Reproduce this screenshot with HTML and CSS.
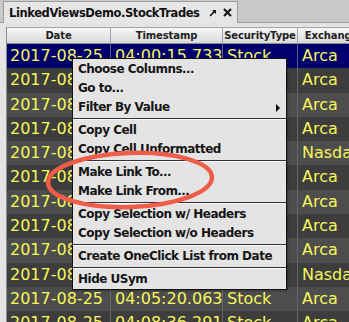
FILE: index.html
```html
<!DOCTYPE html>
<html lang="en">
<head>
    <meta charset="UTF-8">
    <title>LinkedViewsDemo.StockTrades</title>
    <link rel="stylesheet" href="styles.css">
</head>
<body>

    <div class="tabbar">
        <div class="tab">
            <span class="tab-title">LinkedViewsDemo.StockTrades</span>
            <svg class="pin" width="8" height="8" viewBox="0 0 8 8">
                <path d="M1 7 L6 2" stroke="#111" stroke-width="1.6"/>
                <path d="M3 1 H7 V5 Z" fill="#111"/>
            </svg>
            <svg class="close" width="9" height="9" viewBox="0 0 9 9">
                <path d="M1 1 L8 8 M8 1 L1 8" stroke="#111" stroke-width="2"/>
            </svg>
        </div>
    </div>

    <div class="panel">
        <div class="grid">
            <div class="head">
                <span>Date</span>
                <span>Timestamp</span>
                <span>SecurityType</span>
                <span>Exchange</span>
            </div>
            <div class="row selected"><span>2017-08-25</span><span>04:00:15.733</span><span>Stock</span><span>Arca</span></div>
            <div class="row"><span>2017-08-25</span><span>04:00:37.102</span><span>Stock</span><span>Arca</span></div>
            <div class="row alt"><span>2017-08-25</span><span>04:01:02.418</span><span>Stock</span><span>Arca</span></div>
            <div class="row"><span>2017-08-25</span><span>04:01:44.590</span><span>Stock</span><span>Arca</span></div>
            <div class="row alt"><span>2017-08-25</span><span>04:02:09.871</span><span>Stock</span><span>Nasdaq</span></div>
            <div class="row"><span>2017-08-25</span><span>04:02:51.226</span><span>Stock</span><span>Arca</span></div>
            <div class="row alt"><span>2017-08-25</span><span>04:03:18.645</span><span>Stock</span><span>Arca</span></div>
            <div class="row"><span>2017-08-25</span><span>04:03:57.309</span><span>Stock</span><span>Arca</span></div>
            <div class="row alt"><span>2017-08-25</span><span>04:04:22.754</span><span>Stock</span><span>Arca</span></div>
            <div class="row"><span>2017-08-25</span><span>04:04:48.180</span><span>Stock</span><span>Nasdaq</span></div>
            <div class="row alt"><span>2017-08-25</span><span>04:05:20.063</span><span>Stock</span><span>Arca</span></div>
            <div class="row"><span>2017-08-25</span><span>04:08:36.291</span><span>Stock</span><span>Arca</span></div>
        </div>
    </div>

    <!-- popup menu over the table -->
    <div class="menu">
        <div class="item">Choose Columns…</div>
        <div class="item">Go to…</div>
        <div class="item">Filter By Value<span class="arrow"></span></div>
        <div class="sep"></div>
        <div class="item">Copy Cell</div>
        <div class="item">Copy Cell Unformatted</div>
        <div class="sep"></div>
        <div class="item">Make Link To…</div>
        <div class="item">Make Link From…</div>
        <div class="sep"></div>
        <div class="item">Copy Selection w/ Headers</div>
        <div class="item">Copy Selection w/o Headers</div>
        <div class="sep"></div>
        <div class="item">Create OneClick List from Date</div>
        <div class="sep"></div>
        <div class="item">Hide USym</div>
    </div>

    <svg class="annot" width="349" height="322" viewBox="0 0 349 322">
        <ellipse cx="130" cy="180" rx="82" ry="27" transform="rotate(-2 130 180)"
                 fill="none" stroke="#ef5c48" stroke-width="4.5"/>
    </svg>

</body>
</html>
```

FILE: styles.css
```css
body {
    margin: 0;
    width: 349px;
    height: 322px;
    overflow: hidden;
    position: relative;
    background-color: #e4e4e4;
    font-family: "DejaVu Sans", sans-serif;
}

.tabbar {
    height: 22px;
    display: flex;
    align-items: flex-end;
    padding-left: 3px;
    background-color: #c9c9c9;
    border-bottom: 1px solid #9c9c9c;
}

.tab {
    box-sizing: border-box;
    width: 235px;
    height: 22px;
    margin-bottom: -1px;
    padding: 0 5px 0 5px;
    display: flex;
    align-items: center;
    background-color: #e6e6e6;
    border: 1px solid #9c9c9c;
    border-bottom: none;
}

.tab-title {
    flex: 1;
    font-size: 11.5px;
    font-weight: bold;
    letter-spacing: -0.4px;
    color: #111;
}

.pin {
    margin-right: 6px;
}

.panel {
    padding: 4px 0 0 6px;
}

.grid {
    border-left: 1px solid #8c8c8c;
}

.head, .row {
    display: grid;
    grid-template-columns: 104px 112px 75px 68px;
}

.head {
    box-sizing: border-box;
    height: 17px;
    background: linear-gradient(#f7f7f7, #d9d9d9);
    border-top: 1px solid #a6a6a6;
    border-bottom: 1px solid #8a8a8a;
}

.head span {
    font-size: 10px;
    font-weight: bold;
    letter-spacing: -0.1px;
    line-height: 15px;
    text-align: center;
    color: #222;
    border-right: 1px solid #a0a0a0;
    white-space: nowrap;
}

.row {
    height: 24.3px;
    background-color: #3d3d3d;
    color: #f6f65c;
    font-size: 16px;
}

.row.alt {
    background-color: #4d4d4d;
}

.row.selected {
    background-color: #00006c;
}

.row span {
    line-height: 24.3px;
    padding-left: 4px;
    border-right: 1px solid #686868;
    white-space: nowrap;
}

.row span:first-child {
    padding-left: 3px;
}

.row.selected span {
    border-right-color: #5a5a8a;
}

.menu {
    position: absolute;
    left: 72px;
    top: 58px;
    box-sizing: border-box;
    width: 215px;
    height: 232px;
    padding-top: 1px;
    background-color: #e4e4e4;
    border: 1px solid #111;
    box-shadow: 1px 1px 2px rgba(0, 0, 0, 0.3);
    font-size: 12px;
    font-weight: bold;
    letter-spacing: -0.5px;
    color: #151515;
}

.item {
    position: relative;
    height: 19px;
    line-height: 19px;
    padding-left: 5px;
    white-space: nowrap;
}

.arrow {
    position: absolute;
    right: 6px;
    top: 6px;
    border-left: 4px solid #000;
    border-top: 4px solid transparent;
    border-bottom: 4px solid transparent;
}

.sep {
    margin: 1px 0;
    border-top: 1px solid #333;
    border-bottom: 1px solid #fafafa;
}

.annot {
    position: absolute;
    left: 0;
    top: 0;
}
```
